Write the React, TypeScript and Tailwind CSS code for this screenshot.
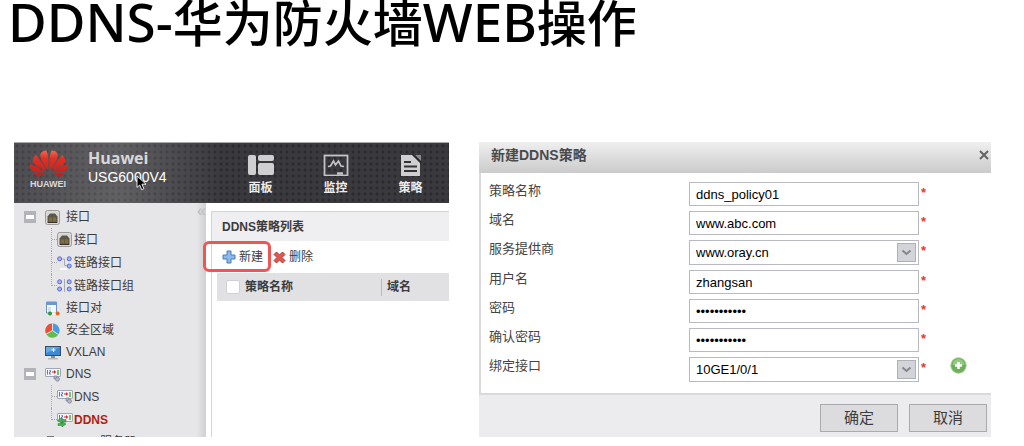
import type { ReactNode } from 'react';
import clsx from 'clsx';
import { SiHuawei } from 'react-icons/si';

function PortIcon() {
  return (
    <svg width="15" height="15" viewBox="0 0 15 15" aria-hidden="true">
      <rect x="0.5" y="0.5" width="14" height="14" rx="2" fill="#d9d8d4" stroke="#9d9c9a" />
      <path d="M2.500 13V6.500L5 3.500h5l2.500 3V13z" fill="#5a574c" />
      <path d="M4.500 7.500h6v4h-6z" fill="#a08740" />
      <path d="M6 7.500v4M7.500 7.500v4M9 7.500v4" stroke="#3b382e" strokeWidth="0.6" />
      <path d="M3 12.500h9" stroke="#35332d" />
    </svg>
  );
}

function LinkIcon({ group = false }: { group?: boolean }) {
  return (
    <svg width="15" height="15" viewBox="0 0 15 15" aria-hidden="true">
      {group ? (
        <path d="M7.500 1v13" stroke="#a9a9b2" fill="none" />
      ) : (
        <path d="M5 4h2.500v6.500H10" stroke="#a9a9b2" fill="none" />
      )}
      <g fill="#a9b8f6" stroke="#5468d4">
        <circle cx="2.600" cy="3.800" r="2" />
        <circle cx="12.200" cy="3.800" r="2" />
        <circle cx="12.200" cy="11" r="2" />
        {group && <circle cx="2.600" cy="11" r="2" />}
      </g>
      {!group && <path d="M3 14h7" stroke="#fff" strokeWidth="1.500" />}
    </svg>
  );
}

function PairIcon() {
  return (
    <svg width="15" height="15" viewBox="0 0 15 15" aria-hidden="true">
      <path d="M1.500 1h10v11h-10z" fill="#f4f8fc" stroke="#6f93bf" />
      <path d="M1 1h11v3H1z" fill="#6c97d0" />
      <path d="M3 6h3v5H3z" fill="#d3e0ee" />
      <path d="M7 12.500h4" stroke="#fff" strokeWidth="2" />
      <circle cx="5" cy="12.500" r="2" fill="#2f9a35" />
      <circle cx="12.600" cy="12.500" r="2" fill="#e2671e" />
    </svg>
  );
}

function ZoneIcon() {
  return (
    <svg width="15" height="15" viewBox="0 0 15 15" aria-hidden="true">
      <path d="M7.500 7.500V.5A7 7 0 0 0 1.200 11z" fill="#e8503c" />
      <path d="M7.500 7.500V.5a7 7 0 0 1 5.800 11z" fill="#4b9be2" />
      <path d="M7.500 7.500 1.200 11a7 7 0 0 0 12.100.5z" fill="#63bb4b" />
      <path d="M7.500 7.500V.5M7.500 7.500 1.200 11M7.500 7.500l5.800 4" stroke="#f2f2f2" strokeWidth="0.8" />
    </svg>
  );
}

function MonitorIcon() {
  return (
    <svg width="16" height="15" viewBox="0 0 16 15" aria-hidden="true">
      <path d="M0 1h16v10H0z" fill="#3c4c60" />
      <path d="M1 2h14v8H1z" fill="#3c8ad6" />
      <path d="M1 2h14L1 8z" fill="#67abe6" />
      <path d="M8.500 3v4M6.500 5h4" stroke="#fff" />
      <path d="M6 11h4v2H6z" fill="#8c9096" />
      <path d="M3 13h10v1.500H3z" fill="#b4b6ba" />
    </svg>
  );
}

function DnsIcon({ dynamic = false }: { dynamic?: boolean }) {
  return (
    <svg width="16" height="15" viewBox="0 0 16 15" aria-hidden="true">
      <rect x="0.5" y="1.500" width="15" height="8" rx="0.5" fill="#f3f4f8" stroke="#a0a6b4" />
      <path d="M2.500 3v4.500M4.500 3.500h1v1.500h-1v2h1.500" stroke="#4f7cc8" fill="none" />
      <path d="M7 5h3.500" stroke="#cf2b22" />
      <path d="M9 3l2 2-2 2z" fill="#cf2b22" />
      <path d="M13 3v5" stroke="#55ae4a" strokeWidth="1.500" />
      {dynamic ? (
        <path
          d="M5 5.500v2h4v2.500H5v1.500L.5 8.500zM5 9.500v2H1v2h4v1.500l4-3z"
          fill="#4fae58"
          stroke="#267a30"
          strokeWidth="0.5"
        />
      ) : (
        <g fill="#b5b8c8" stroke="#7c8095" strokeWidth="0.7">
          <path d="M9 9h3v3H9z" />
          <circle cx="12.500" cy="12.200" r="2" />
        </g>
      )}
    </svg>
  );
}

function ServerIcon() {
  return (
    <svg width="15" height="15" viewBox="0 0 15 15" aria-hidden="true">
      <rect x="2.500" y="1.500" width="6" height="13" fill="#d2d2d6" stroke="#77777c" />
    </svg>
  );
}

function Toggle() {
  return (
    <button type="button" aria-label="-" className="flex h-3 w-3 items-center justify-center bg-[#b3b4b9]">
      <span className="h-1 w-2 bg-white" />
    </button>
  );
}

type TreeRowProps = {
  icon: ReactNode;
  label: string;
  expanded?: boolean;
};

function TreeRow({ icon, label, expanded }: TreeRowProps) {
  return (
    <div className="flex h-[22px] items-center pl-[10px]">
      <span className="w-[21px]">{expanded && <Toggle />}</span>
      <span className="w-[21px]">{icon}</span>
      <a href="#">{label}</a>
    </div>
  );
}

type ChildRowProps = {
  icon: ReactNode;
  label: string;
  active?: boolean;
  last?: boolean;
};

function ChildRow({ icon, label, active, last }: ChildRowProps) {
  return (
    <li className="flex h-[23px] items-center pl-[37px]">
      <span
        className={clsx(
          'w-[6px] self-stretch border-l border-dotted border-[#a5a5aa]',
          last && 'mb-[11px] border-b',
        )}
      >
        {!last && <span className="block h-3 border-b border-dotted border-[#a5a5aa]" />}
      </span>
      <span className="w-[17px]">{icon}</span>
      <a href="#" className={clsx(active && 'font-bold text-[#b01e12]')}>
        {label}
      </a>
    </li>
  );
}

const NAV = [
  {
    label: '面板',
    icon: (
      <svg width="26" height="22" viewBox="0 0 26 22" fill="#cfcfd1" aria-hidden="true">
        <rect x="0" y="1" width="8" height="20" rx="2" />
        <rect x="10" y="1" width="16" height="6" rx="2" />
        <rect x="10" y="9" width="16" height="12" rx="2" />
      </svg>
    ),
  },
  {
    label: '监控',
    icon: (
      <svg width="26" height="22" viewBox="0 0 26 22" fill="none" stroke="#c4c4c6" aria-hidden="true">
        <rect x="1.500" y="1.500" width="23" height="20" strokeWidth="1.800" />
        <path d="M5 12.500l2.500-.5 3-5 2 4L15.500 7l2.500 5 3 .5" strokeWidth="1.700" />
        <path d="M14 19.500h6" strokeWidth="2.500" />
      </svg>
    ),
  },
  {
    label: '策略',
    icon: (
      <svg width="22" height="22" viewBox="0 0 22 22" aria-hidden="true">
        <path d="M1 1h11l8 8v13H1z" fill="#cfcfd1" />
        <path d="M15 1h6v6z" fill="#8a8a8d" />
        <path d="M12.500 0l9 9" stroke="#29292c" strokeWidth="1.500" />
        <path d="M4 8h7M4 12.500h13M4 17h13" stroke="#333336" strokeWidth="2" />
      </svg>
    ),
  },
];

function ConsoleHeader() {
  return (
    <header className="relative flex h-[61px] border-t border-[#aaa] bg-[#3a3a3e] bg-[radial-gradient(circle,#2b2b2f_1px,transparent_2px)] bg-size-[6px_6px] text-[#d8d8da]">
      <div className="flex w-[209px] bg-linear-to-r from-white/10 via-white/20 to-transparent pl-4">
        <div className="flex w-[58px] flex-col pt-[6px]">
          <svg width="0" height="0" className="absolute" aria-hidden="true">
            <linearGradient id="petals" x1="0" y1="0" x2="0" y2="1">
              <stop offset="0" stopColor="#ee6a50" />
              <stop offset="0.3" stopColor="#de3226" />
              <stop offset="1" stopColor="#c41c18" />
            </linearGradient>
          </svg>
          <SiHuawei
            viewBox="0 2 24 20"
            preserveAspectRatio="none"
            fill="url(#petals)"
            className="h-[29px] w-[38px]"
          />
          <span className="text-[9px] leading-[12px] font-bold">HUAWEI</span>
        </div>
        <div>
          <div className="pt-[5px] font-['Open_Sans'] text-base leading-[20px] font-bold">Huawei</div>
          <div className="text-sm leading-[18px] text-white">USG6000V4</div>
        </div>
      </div>
      <nav className="flex">
        {NAV.map((item) => (
          <a
            key={item.label}
            href="#"
            className="flex w-[75px] flex-col items-center pt-[11px] text-xs font-bold"
          >
            {item.icon}
            <span className="leading-[25px] text-[#ececee]">{item.label}</span>
          </a>
        ))}
      </nav>
      <svg
        width="11"
        height="16"
        viewBox="0 0 11 16"
        className="absolute top-[32px] left-[122px]"
        aria-hidden="true"
      >
        <path
          d="M1 1v11.500l2.700-2.500 2 4.700 2.200-1-2-4.500H10z"
          fill="#000"
          stroke="#fff"
          strokeWidth="0.9"
        />
      </svg>
    </header>
  );
}

function Sidebar() {
  return (
    <aside className="relative w-[192px] shrink-0 bg-[#e6e5e8] bg-linear-to-r from-[#e6e5e8] from-95% to-[#d0d0d3] pt-[3px]">
      <button type="button" className="absolute top-0 right-0 h-4 text-base leading-4 text-[#b9b9be]">
        «
      </button>
      <TreeRow icon={<PortIcon />} label="接口" expanded />
      <ul>
        <ChildRow icon={<PortIcon />} label="接口" />
        <ChildRow icon={<LinkIcon />} label="链路接口" />
        <ChildRow icon={<LinkIcon group />} label="链路接口组" last />
      </ul>
      <TreeRow icon={<PairIcon />} label="接口对" />
      <TreeRow icon={<ZoneIcon />} label="安全区域" />
      <TreeRow icon={<MonitorIcon />} label="VXLAN" />
      <TreeRow icon={<DnsIcon />} label="DNS" expanded />
      <ul>
        <ChildRow icon={<DnsIcon />} label="DNS" />
        <ChildRow icon={<DnsIcon dynamic />} label="DDNS" active last />
      </ul>
      <div className="h-[6px] overflow-hidden">
        <TreeRow icon={<ServerIcon />} label="DHCP服务器" />
      </div>
    </aside>
  );
}

function PolicyList() {
  return (
    <section className="mt-2 ml-[5px] flex-1 border-t border-l border-[#d4d4d8]">
      <h2 className="h-[29px] bg-[#efeef1] pl-[10px] text-xs leading-[31px] font-bold">DDNS策略列表</h2>
      <div className="relative flex h-[32px] items-center pl-[10px]">
        <button type="button" className="flex items-center gap-[3px]">
          <svg width="14" height="14" viewBox="0 0 14 14" aria-hidden="true">
            <path
              d="M5 1h4v4h4v4H9v4H5V9H1V5h4z"
              fill="#8db9ea"
              stroke="#4a7cba"
              strokeLinejoin="round"
            />
          </svg>
          新建
        </button>
        <button type="button" className="ml-[10px] flex items-center gap-[3px]">
          <svg width="13" height="13" viewBox="0 0 13 13" aria-hidden="true">
            <path
              d="M3.500 1l3 3 3-3L12 3.500l-3 3 3 3L9.500 12l-3-3-3 3L1 9.500l3-3-3-3z"
              fill="#dc5a52"
              stroke="#b8352f"
              strokeLinejoin="round"
            />
          </svg>
          删除
        </button>
        <span className="pointer-events-none absolute top-0 -left-[9px] h-[31px] w-[68px] rounded-md border-3 border-[#f05552]" />
      </div>
      <div className="pl-[5px]">
        <table className="w-full table-fixed bg-[#e1e0e3] text-left">
          <thead>
            <tr className="h-[28px]">
              <th className="w-[28px] pl-[9px]">
                <input
                  type="checkbox"
                  aria-label="策略名称"
                  className="block h-[14px] w-[14px] appearance-none rounded-xs border border-[#d0d0d4] bg-white"
                />
              </th>
              <th>
                <div className="border-r border-[#b8b8bc] leading-[17px]">策略名称</div>
              </th>
              <th className="w-[67px] pl-[5px]">域名</th>
            </tr>
          </thead>
        </table>
      </div>
    </section>
  );
}

type Field = {
  id: string;
  label: string;
  value: string;
  kind: 'text' | 'password' | 'select';
};

const FIELDS: Field[] = [
  { id: 'policy', label: '策略名称', value: 'ddns_policy01', kind: 'text' },
  { id: 'domain', label: '域名', value: 'www.abc.com', kind: 'text' },
  { id: 'provider', label: '服务提供商', value: 'www.oray.cn', kind: 'select' },
  { id: 'user', label: '用户名', value: 'zhangsan', kind: 'text' },
  { id: 'password', label: '密码', value: 'zhangsan123', kind: 'password' },
  { id: 'confirm', label: '确认密码', value: 'zhangsan123', kind: 'password' },
  { id: 'iface', label: '绑定接口', value: '10GE1/0/1', kind: 'select' },
];

function FieldRow({ field }: { field: Field }) {
  return (
    <div className="flex items-start">
      <label htmlFor={field.id} className="w-[200px] leading-[17px] text-[#444]">
        {field.label}
      </label>
      {field.kind === 'select' ? (
        <div className="relative w-[230px]">
          <select
            id={field.id}
            defaultValue={field.value}
            className="block h-[25px] w-full appearance-none border border-[#b9b9c2] bg-white pl-[6px] text-black"
          >
            <option>{field.value}</option>
          </select>
          <span className="pointer-events-none absolute top-[3px] right-[3px] flex h-[19px] w-[19px] items-center justify-center border border-[#b0b0b8] bg-[#d3d3da]">
            <svg width="11" height="7" viewBox="0 0 11 7" fill="none" aria-hidden="true">
              <path d="M1.500 1.500l4 3.500 4-3.500" stroke="#85858a" strokeWidth="2" />
            </svg>
          </span>
        </div>
      ) : (
        <input
          id={field.id}
          type={field.kind}
          defaultValue={field.value}
          className="block h-[24px] w-[230px] border border-[#b9b9c2] bg-white px-[6px] pt-px text-black"
        />
      )}
      <span className="w-[31px] pl-[2px] leading-[21px] font-bold text-[#e8382e]">*</span>
      {field.id === 'iface' && (
        <button type="button" aria-label="+" className="rounded-full">
          <svg width="17" height="17" viewBox="0 0 17 17" aria-hidden="true">
            <circle cx="8.500" cy="8.500" r="7.700" fill="#6fae5c" stroke="#9fcb90" />
            <path d="M2.500 8a6 6 0 0 1 12 0z" fill="#94c983" />
            <path d="M8.500 5v7M5 8.500h7" stroke="#fff" strokeWidth="2.500" />
          </svg>
        </button>
      )}
    </div>
  );
}

function PolicyDialog() {
  return (
    <section className="text-[13px]">
      <header className="flex h-[31px] items-center justify-between bg-linear-to-b from-[#efeff0] to-[#cbcbcc] pr-[2px] pl-[12px]">
        <h2 className="pb-[5px] text-sm leading-[26px] font-bold text-[#4a4a4c]">新建DDNS策略</h2>
        <button type="button" aria-label="×" className="mb-[5px]">
          <svg width="10" height="10" viewBox="0 0 10 10" aria-hidden="true">
            <path d="M1 1l8 8M9 1l-8 8" stroke="#626264" strokeWidth="2" />
          </svg>
        </button>
      </header>
      <form className="flex flex-col gap-[5px] border-b-2 border-l-2 border-[#dadadc] pt-[9px] pb-[11px] pl-[8px]">
        {FIELDS.map((field) => (
          <FieldRow key={field.id} field={field} />
        ))}
      </form>
      <footer className="flex h-[42px] items-center justify-end gap-[11px] bg-[#ececee] pr-[4px]">
        {['确定', '取消'].map((text) => (
          <button
            key={text}
            type="button"
            className="mt-1 h-[28px] w-[78px] border border-[#a9a9ae] bg-[#dcdcde] text-[15px] leading-[26px] text-[#3c3c3e]"
          >
            {text}
          </button>
        ))}
      </footer>
    </section>
  );
}

export default function App() {
  return (
    <main className="min-h-screen bg-white font-['Liberation_Sans','Noto_Sans_CJK_SC',sans-serif]">
      <h1 className="h-[142px] pl-[8px] font-['Noto_Sans','Noto_Sans_CJK_SC',sans-serif] text-[50px] leading-[44px] font-medium whitespace-nowrap text-black">
        <span className="text-[53px]">DDNS-</span>华为防火墙<span className="text-[53px]">WEB</span>操作
      </h1>
      <div className="grid grid-cols-[435fr_512fr] items-start gap-[30px] pr-[33px] pl-[14px]">
        <section className="text-xs text-[#3c3c3e]">
          <ConsoleHeader />
          <div className="flex">
            <Sidebar />
            <PolicyList />
          </div>
        </section>
        <PolicyDialog />
      </div>
    </main>
  );
}
